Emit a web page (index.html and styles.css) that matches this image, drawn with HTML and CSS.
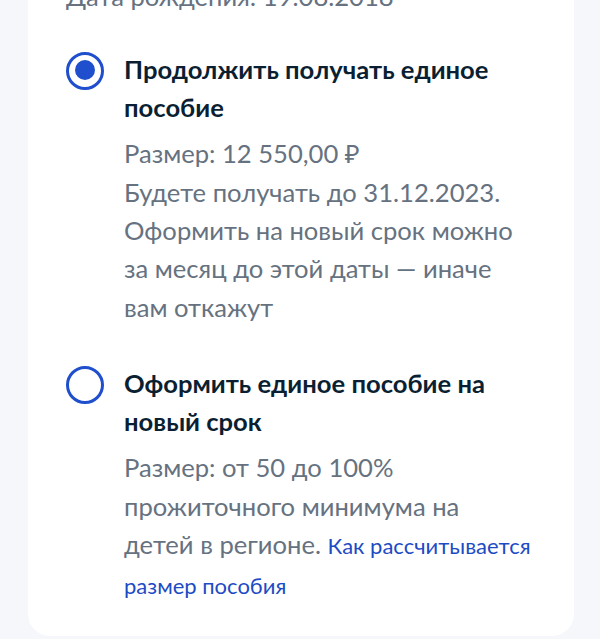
FILE: index.html
```html
<!DOCTYPE html>
<html lang="ru">
<head>
    <meta charset="UTF-8">
    <meta name="viewport" content="width=device-width, initial-scale=1.0">
    <title>Единое пособие</title>
    <link rel="stylesheet" href="styles.css">
</head>
<body>

<div class="card">
    <div class="birth">Дата рождения: 19.08.2018</div>

    <label class="option">
        <span class="radio checked"></span>
        <span class="option-text">
            <span class="option-title">Продолжить получать единое пособие</span>
            <span class="option-desc">Размер: 12 550,00 ₽<br>Будете получать до 31.12.2023. Оформить на новый срок можно за месяц до этой даты — иначе вам откажут</span>
        </span>
    </label>

    <label class="option">
        <span class="radio"></span>
        <span class="option-text">
            <span class="option-title">Оформить единое пособие на новый срок</span>
            <span class="option-desc">Размер: от 50 до 100% прожиточного минимума на детей в регионе. <a href="#" class="link">Как рассчитывается размер пособия</a></span>
        </span>
    </label>
</div>

</body>
</html>
```

FILE: styles.css
```css
body { margin: 0; background: #f5f7fa; font-family: Lato, "Noto Sans", sans-serif; }
.card { margin: -40px 26px 0 28px; padding: 16.9px 40px 30px 38px; background: white; border-radius: 0 0 22px 22px; }
.birth { font-size: 25.6px; line-height: 38.4px; color: #66727f; margin-bottom: 34.3px; }
.option { display: flex; gap: 20px; margin-bottom: 37.4px; cursor: pointer; }
.option:last-child { margin-bottom: 0; }
.radio { flex: none; width: 38px; height: 38px; box-sizing: border-box; border: 3.5px solid #1f4fcc; border-radius: 50%; margin-top: 2px; position: relative; }
.radio.checked::after { content: ""; position: absolute; left: 5.5px; top: 5.5px; width: 20px; height: 20px; border-radius: 50%; background: #1f4fcc; }
.option-text { display: flex; flex-direction: column; gap: 7.8px; }
.option-title { font-size: 25.6px; line-height: 38.4px; font-weight: bold; color: #0b1f33; }
.option-desc { font-size: 25.6px; line-height: 38.4px; color: #66727f; }
.link { font-size: 22px; line-height: 38.4px; color: #1d4bc4; text-decoration: none; }
```
